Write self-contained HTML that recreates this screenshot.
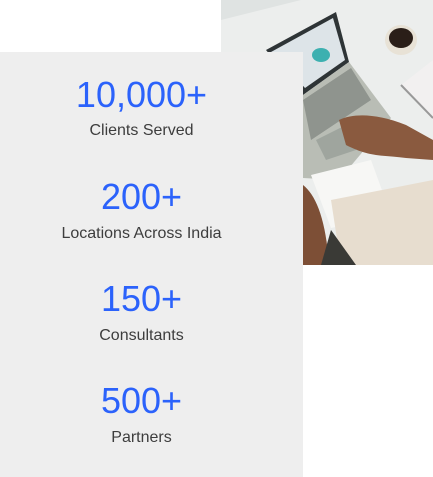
<!DOCTYPE html>
<html><head><style>
html,body{margin:0;padding:0;background:#fff;width:433px;height:477px;overflow:hidden;position:relative;font-family:"Liberation Sans",sans-serif}
.photo{position:absolute;left:221px;top:0;width:212px;height:265px}
.panel{position:absolute;left:0;top:52px;width:303px;height:425px;background:#eeeeee}
.n{position:absolute;left:0;width:283px;text-align:center;color:#2b62fb;font-size:36px;line-height:40px}
.l{position:absolute;left:0;width:283px;text-align:center;color:#3d3d3d;font-size:16px;line-height:20px}
</style></head><body>
<svg class="photo" viewBox="0 0 212 265" width="212" height="265">
<rect width="212" height="265" fill="#eceeed"/>
<polygon points="0,0 80,0 0,20" fill="#dfe3e2"/>
<polygon points="45,50 115,12 128,62 82,95" fill="#2e3436"/>
<polygon points="50,52 112,18 124,60 84,88" fill="#dde4e8"/>
<ellipse cx="100" cy="55" rx="9" ry="7" fill="#3db0b0"/>
<polygon points="82,95 128,62 170,118 118,180 82,178" fill="#b9bdb5"/>
<polygon points="82,100 130,68 150,100 90,140" fill="#8f948e"/>
<polygon points="95,140 125,125 135,150 105,160" fill="#9fa59e"/>
<path d="M118,120 C135,112 160,115 185,125 L212,140 L212,160 L185,158 C165,155 150,158 125,145 Z" fill="#8a5a3f"/>
<polygon points="90,175 150,160 170,215 110,228" fill="#f7f7f5"/>
<path d="M110,200 L212,180 L212,265 L120,265 Z" fill="#e7ddcf"/>
<path d="M82,185 C95,195 105,220 108,265 L82,265 Z" fill="#7d4f36"/>
<path d="M110,230 L135,265 L100,265 Z" fill="#3a3a36"/>
<ellipse cx="180" cy="40" rx="16" ry="15" fill="#e8e2d6"/>
<ellipse cx="180" cy="38" rx="12" ry="10" fill="#2a1e18"/>
<polygon points="180,85 212,60 212,120" fill="#f2f0f0"/>
<line x1="180" y1="85" x2="212" y2="118" stroke="#999" stroke-width="2"/>
</svg>
<div class="panel"></div>
<div class="n" style="top:75px">10,000+</div>
<div class="l" style="top:121px">Clients Served</div>
<div class="n" style="top:177px">200+</div>
<div class="l" style="top:224px">Locations Across India</div>
<div class="n" style="top:279px">150+</div>
<div class="l" style="top:326px">Consultants</div>
<div class="n" style="top:381px">500+</div>
<div class="l" style="top:428px">Partners</div>
</body></html>
